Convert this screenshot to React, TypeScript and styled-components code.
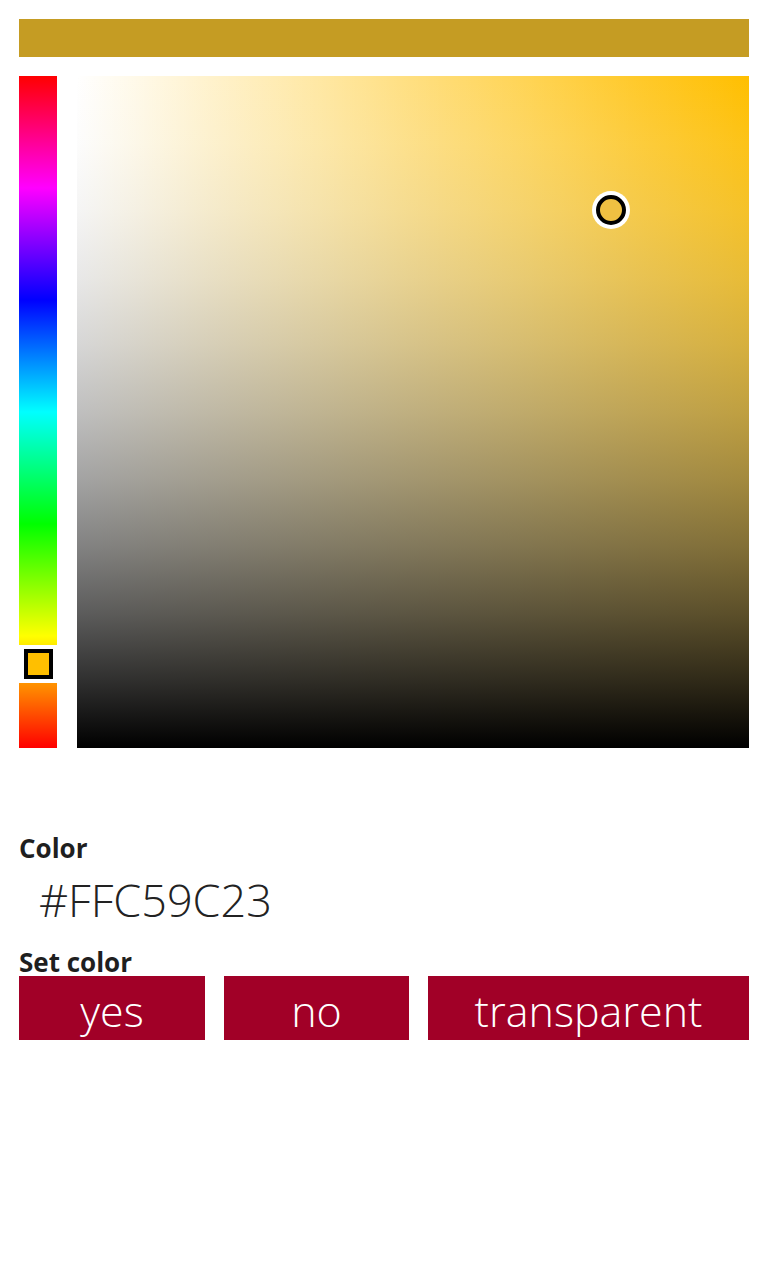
import styled, { createGlobalStyle } from 'styled-components';

const Global = createGlobalStyle`
	html, body {
		margin: 0;
		padding: 0;
		background: #fff;
	}
	body {
		font-family: 'Open Sans', 'Noto Sans', sans-serif;
	}
`;

const HUE = 45;
const SAT = 0.795;
const VAL = 0.8;
const HEX = '#FFC59C23';

// the old XAML brush blends #00FFFFFF -> #FF000000 without premultiplying,
// so the middle goes greyish. fake it with a bunch of stops
const shadeStops = Array.from({ length: 11 }, (_, i) => {
	const t = i / 10;
	const c = Math.round(255 * (1 - t));
	return `rgba(${c}, ${c}, ${c}, ${t}) ${t * 100}%`;
}).join(', ');

const Page = styled.div`
	width: 768px;
	min-height: 1280px;
	box-sizing: border-box;
	padding: 19px 19px 0 19px;
	display: flex;
	flex-direction: column;
`;

const Preview = styled.div<{ $color: string }>`
	height: 38px;
	background: ${(p) => p.$color};
`;

const PickerRow = styled.div`
	margin-top: 19px;
	display: flex;
	gap: 20px;
	height: 672px;
`;

const HueStrip = styled.div`
	position: relative;
	width: 38px;
	flex: none;
	background: linear-gradient(
		to bottom,
		#ff0000 0%,
		#ff00ff 16.67%,
		#0000ff 33.33%,
		#00ffff 50%,
		#00ff00 66.67%,
		#ffff00 83.33%,
		#ff0000 100%
	);
`;

const HueThumb = styled.div`
	position: absolute;
	left: 0;
	width: 38px;
	height: 38px;
	background: #fff;
	display: flex;
	align-items: center;
	justify-content: center;
	transform: translateY(-50%);
`;

const HueSwatch = styled.div<{ $color: string }>`
	width: 21px;
	height: 22px;
	border: 4px solid #000;
	background: ${(p) => p.$color};
`;

const Square = styled.div<{ $hue: number }>`
	position: relative;
	flex: 1;
	background:
		linear-gradient(to bottom, ${shadeStops}),
		linear-gradient(to right, #fff, rgba(255, 255, 255, 0)),
		hsl(${(p) => p.$hue}, 100%, 50%);
`;

const Knob = styled.div<{ $color: string }>`
	position: absolute;
	width: 30px;
	height: 30px;
	box-sizing: border-box;
	border-radius: 50%;
	border: 4px solid #000;
	box-shadow: 0 0 0 4px #fff;
	background: ${(p) => p.$color};
	transform: translate(-50%, -50%);
`;

const Label = styled.div<{ $top: number }>`
	margin-top: ${(p) => p.$top}px;
	font-size: 26px;
	font-weight: 700;
	line-height: 32px;
	color: #1f1f1f;
`;

const HexValue = styled.div`
	margin: 7px 0 17px 20px;
	font-size: 45px;
	font-weight: 300;
	line-height: 58px;
	color: #222;
`;

const Buttons = styled.div`
	display: grid;
	grid-template-columns: 186px 185px 1fr;
	gap: 19px;
	margin-top: -2px;
`;

const Btn = styled.button`
	height: 64px;
	box-sizing: border-box;
	border: 0;
	padding: 6px 0 0 0;
	background: #a10027;
	color: #fff;
	font-family: 'Open Sans', 'Noto Sans', sans-serif;
	font-size: 43px;
	font-weight: 300;
	line-height: 58px;
	display: flex;
	align-items: flex-start;
	justify-content: center;
	cursor: pointer;
`;

export default function App() {
	const previewColor = '#' + HEX.slice(3);
	const hueColor = `hsl(${HUE}, 100%, 50%)`;

	return (
		<>
			<Global />
			<Page>
				<Preview $color={previewColor} />
				<PickerRow>
					<HueStrip>
						<HueThumb style={{ top: `${(1 - HUE / 360) * 100}%` }}>
							<HueSwatch $color={hueColor} />
						</HueThumb>
					</HueStrip>
					<Square $hue={HUE}>
						<Knob
							$color='#efc042'
							style={{ left: `${SAT * 100}%`, top: `${(1 - VAL) * 100}%` }}
						/>
					</Square>
				</PickerRow>
				<Label $top={84}>Color</Label>
				<HexValue>{HEX}</HexValue>
				<Label $top={0}>Set color</Label>
				<Buttons>
					<Btn>yes</Btn>
					<Btn>no</Btn>
					<Btn>transparent</Btn>
				</Buttons>
			</Page>
		</>
	);
}
